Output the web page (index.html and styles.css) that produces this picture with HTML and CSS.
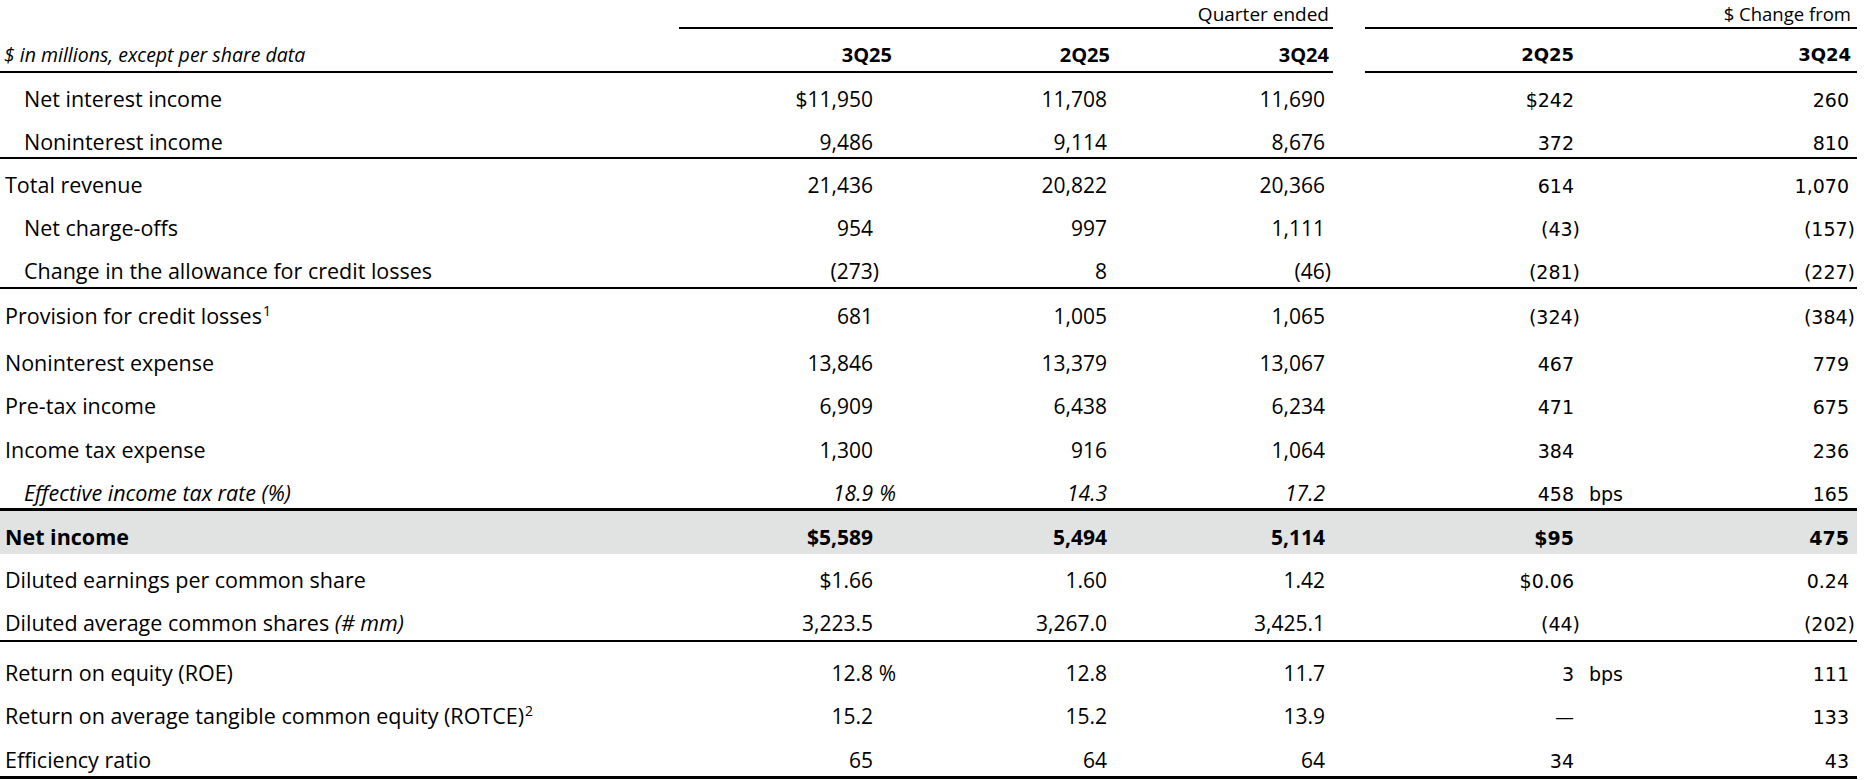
FILE: index.html
```html
<!DOCTYPE html>
<html lang="en">
<head>
<meta charset="utf-8">
<title>Quarterly results</title>
<link rel="stylesheet" href="styles.css">
</head>
<body>
<div class="report">
  <div class="row top">
    <div class="grp g1">Quarter ended</div>
    <div class="grp g2">$ Change from</div>
  </div>
  <div class="row head">
    <div class="hl">$ in millions, except per share data</div>
    <div class="hc h1">3Q25</div>
    <div class="hc h2">2Q25</div>
    <div class="hc h3">3Q24</div>
    <div class="hgap"></div>
    <div class="hc hd h4">2Q25</div>
    <div class="hc hd h5">3Q24</div>
  </div>

  <div class="row">
    <div class="lab ind">Net interest income</div>
    <div class="c c1"><span class="v">$11,950</span><span class="sx"></span></div>
    <div class="c c2"><span class="v">11,708</span></div>
    <div class="c c3"><span class="v">11,690</span></div>
    <div class="gap"></div>
    <div class="c d c4"><span class="v">$242</span><span class="sx"></span></div>
    <div class="c d c5"><span class="v">260</span></div>
  </div>
  <div class="row rule">
    <div class="lab ind">Noninterest income</div>
    <div class="c c1"><span class="v">9,486</span><span class="sx"></span></div>
    <div class="c c2"><span class="v">9,114</span></div>
    <div class="c c3"><span class="v">8,676</span></div>
    <div class="gap"></div>
    <div class="c d c4"><span class="v">372</span><span class="sx"></span></div>
    <div class="c d c5"><span class="v">810</span></div>
  </div>
  <div class="row">
    <div class="lab">Total revenue</div>
    <div class="c c1"><span class="v">21,436</span><span class="sx"></span></div>
    <div class="c c2"><span class="v">20,822</span></div>
    <div class="c c3"><span class="v">20,366</span></div>
    <div class="gap"></div>
    <div class="c d c4"><span class="v">614</span><span class="sx"></span></div>
    <div class="c d c5"><span class="v">1,070</span></div>
  </div>
  <div class="row">
    <div class="lab ind">Net charge-offs</div>
    <div class="c c1"><span class="v">954</span><span class="sx"></span></div>
    <div class="c c2"><span class="v">997</span></div>
    <div class="c c3"><span class="v">1,111</span></div>
    <div class="gap"></div>
    <div class="c d c4"><span class="v">(43<span class="rp">)</span></span><span class="sx"></span></div>
    <div class="c d c5"><span class="v">(157<span class="rp">)</span></span></div>
  </div>
  <div class="row rule h44">
    <div class="lab ind">Change in the allowance for credit losses</div>
    <div class="c c1"><span class="v">(273<span class="rp">)</span></span><span class="sx"></span></div>
    <div class="c c2"><span class="v">8</span></div>
    <div class="c c3"><span class="v">(46<span class="rp">)</span></span></div>
    <div class="gap"></div>
    <div class="c d c4"><span class="v">(281<span class="rp">)</span></span><span class="sx"></span></div>
    <div class="c d c5"><span class="v">(227<span class="rp">)</span></span></div>
  </div>
  <div class="row h48 pt13">
    <div class="lab">Provision for credit losses<sup class="fn">1</sup></div>
    <div class="c c1"><span class="v">681</span><span class="sx"></span></div>
    <div class="c c2"><span class="v">1,005</span></div>
    <div class="c c3"><span class="v">1,065</span></div>
    <div class="gap"></div>
    <div class="c d c4"><span class="v">(324<span class="rp">)</span></span><span class="sx"></span></div>
    <div class="c d c5"><span class="v">(384<span class="rp">)</span></span></div>
  </div>
  <div class="row">
    <div class="lab">Noninterest expense</div>
    <div class="c c1"><span class="v">13,846</span><span class="sx"></span></div>
    <div class="c c2"><span class="v">13,379</span></div>
    <div class="c c3"><span class="v">13,067</span></div>
    <div class="gap"></div>
    <div class="c d c4"><span class="v">467</span><span class="sx"></span></div>
    <div class="c d c5"><span class="v">779</span></div>
  </div>
  <div class="row h44">
    <div class="lab">Pre-tax income</div>
    <div class="c c1"><span class="v">6,909</span><span class="sx"></span></div>
    <div class="c c2"><span class="v">6,438</span></div>
    <div class="c c3"><span class="v">6,234</span></div>
    <div class="gap"></div>
    <div class="c d c4"><span class="v">471</span><span class="sx"></span></div>
    <div class="c d c5"><span class="v">675</span></div>
  </div>
  <div class="row">
    <div class="lab">Income tax expense</div>
    <div class="c c1"><span class="v">1,300</span><span class="sx"></span></div>
    <div class="c c2"><span class="v">916</span></div>
    <div class="c c3"><span class="v">1,064</span></div>
    <div class="gap"></div>
    <div class="c d c4"><span class="v">384</span><span class="sx"></span></div>
    <div class="c d c5"><span class="v">236</span></div>
  </div>
  <div class="row rule3 h44">
    <div class="lab ind it">Effective income tax rate (%)</div>
    <div class="c c1 it"><span class="v">18.9</span><span class="sx">%</span></div>
    <div class="c c2 it"><span class="v">14.3</span></div>
    <div class="c c3 it"><span class="v">17.2</span></div>
    <div class="gap"></div>
    <div class="c d c4"><span class="v">458</span><span class="sx">bps</span></div>
    <div class="c d c5"><span class="v">165</span></div>
  </div>
  <div class="row total">
    <div class="lab">Net income</div>
    <div class="c c1"><span class="v">$5,589</span><span class="sx"></span></div>
    <div class="c c2"><span class="v">5,494</span></div>
    <div class="c c3"><span class="v">5,114</span></div>
    <div class="gap"></div>
    <div class="c d c4"><span class="v">$95</span><span class="sx"></span></div>
    <div class="c d c5"><span class="v">475</span></div>
  </div>
  <div class="row">
    <div class="lab">Diluted earnings per common share</div>
    <div class="c c1"><span class="v">$1.66</span><span class="sx"></span></div>
    <div class="c c2"><span class="v">1.60</span></div>
    <div class="c c3"><span class="v">1.42</span></div>
    <div class="gap"></div>
    <div class="c d c4"><span class="v">$0.06</span><span class="sx"></span></div>
    <div class="c d c5"><span class="v">0.24</span></div>
  </div>
  <div class="row rule h45">
    <div class="lab">Diluted average common shares <em>(# mm)</em></div>
    <div class="c c1"><span class="v">3,223.5</span><span class="sx"></span></div>
    <div class="c c2"><span class="v">3,267.0</span></div>
    <div class="c c3"><span class="v">3,425.1</span></div>
    <div class="gap"></div>
    <div class="c d c4"><span class="v">(44<span class="rp">)</span></span><span class="sx"></span></div>
    <div class="c d c5"><span class="v">(202<span class="rp">)</span></span></div>
  </div>
  <div class="row h48 pt17">
    <div class="lab">Return on equity (ROE)</div>
    <div class="c c1"><span class="v">12.8</span><span class="sx">%</span></div>
    <div class="c c2"><span class="v">12.8</span></div>
    <div class="c c3"><span class="v">11.7</span></div>
    <div class="gap"></div>
    <div class="c d c4"><span class="v">3</span><span class="sx">bps</span></div>
    <div class="c d c5"><span class="v">111</span></div>
  </div>
  <div class="row h44">
    <div class="lab">Return on average tangible common equity (ROTCE)<sup class="fn">2</sup></div>
    <div class="c c1"><span class="v">15.2</span><span class="sx"></span></div>
    <div class="c c2"><span class="v">15.2</span></div>
    <div class="c c3"><span class="v">13.9</span></div>
    <div class="gap"></div>
    <div class="c d c4"><span class="v">&mdash;</span><span class="sx"></span></div>
    <div class="c d c5"><span class="v">133</span></div>
  </div>
  <div class="row rule3 h45">
    <div class="lab">Efficiency ratio</div>
    <div class="c c1"><span class="v">65</span><span class="sx"></span></div>
    <div class="c c2"><span class="v">64</span></div>
    <div class="c c3"><span class="v">64</span></div>
    <div class="gap"></div>
    <div class="c d c4"><span class="v">34</span><span class="sx"></span></div>
    <div class="c d c5"><span class="v">43</span></div>
  </div>
</div>
</body>
</html>
```

FILE: styles.css
```css
html, body {
  margin: 0;
  padding: 0;
  background: #ffffff;
  color: #000000;
}

.report {
  width: 1857px;
  font-family: "Open Sans", "Noto Sans", sans-serif;
  font-size: 21px;
}

.row {
  display: grid;
  grid-template-columns: 679px 221px 215px 218px 32px 275px 217px;
  align-items: baseline;
  box-sizing: border-box;
  height: 43px;
  padding-top: 12px;
  line-height: 28px;
}

.row.h44 { height: 44px; }
.row.h45 { height: 45px; }
.row.h48 { height: 48px; }
.row.pt13 { padding-top: 13px; }
.row.pt17 { padding-top: 17px; }

.row.rule { border-bottom: 2px solid #000; }
.row.rule3 { border-bottom: 3px solid #000; }

.row.total {
  background: #e1e2e2;
  font-weight: 700;
}

/* top group headers */
.row.top {
  height: 29px;
  padding-top: 0;
  align-items: end;
}
.grp {
  font-size: 19px;
  line-height: 24px;
  text-align: right;
  border-bottom: 2px solid #000;
  padding-bottom: 1px;
}
.g1 { grid-column: 2 / 5; padding-right: 4px; }
.g2 { grid-column: 6 / 8; padding-right: 6px; font-size: 18.5px; }

/* column header row */
.row.head {
  height: 44px;
  padding-top: 0;
  align-items: end;
}
.hl, .hc {
  border-bottom: 2px solid #000;
  line-height: 26px;
  padding-bottom: 3px;
}
.hl {
  font-style: italic;
  font-size: 19.5px;
  padding-left: 4px;
}
.hc {
  font-weight: 700;
  font-size: 20px;
  text-align: right;
}
.hd {
  font-family: "DejaVu Sans", sans-serif;
  font-size: 18px;
}
.h1 { padding-right: 8px; }
.h2 { padding-right: 5px; }
.h3 { padding-right: 4px; }
.h4 { padding-right: 66px; }
.h5 { padding-right: 6px; }

/* labels */
.lab {
  padding-left: 5px;
  white-space: nowrap;
  font-size: 21.5px;
}
.lab.ind { padding-left: 24px; }
.it { font-style: italic; }
.lab em { font-style: italic; }

.fn {
  font-size: 14px;
  line-height: 0;
  vertical-align: 8px;
  margin-left: 1px;
}

/* number cells */
.c {
  display: flex;
  justify-content: flex-end;
  align-items: baseline;
  white-space: nowrap;
}
.c .rp { margin-right: -6px; }
.c1 { padding-right: 4px; }
.c1 .sx { width: 23px; text-align: right; }
.c2 { padding-right: 8px; }
.c3 { padding-right: 8px; }

.d {
  font-family: "DejaVu Sans", sans-serif;
  font-size: 19px;
}
.c4 .sx {
  width: 66px;
  box-sizing: border-box;
  padding-left: 15px;
  text-align: left;
}
.c5 { padding-right: 8px; }
```
